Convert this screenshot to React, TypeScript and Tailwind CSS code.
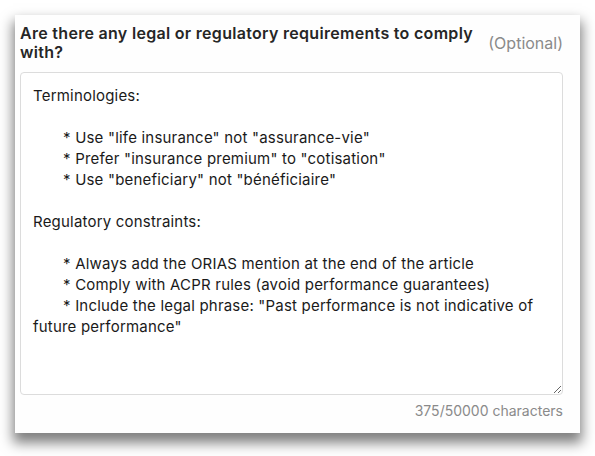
import { useState } from 'react';

const initialText = `Terminologies:

\t* Use "life insurance" not "assurance-vie"
\t* Prefer "insurance premium" to "cotisation"
\t* Use "beneficiary" not "bénéficiaire"

Regulatory constraints:

\t* Always add the ORIAS mention at the end of the article
\t* Comply with ACPR rules (avoid performance guarantees)
\t* Include the legal phrase: "Past performance is not indicative of future performance"
`;

export default function App() {
  const [value, setValue] = useState(initialText);

  return (
    <div className="min-h-screen bg-white p-[15px] font-['Inter',sans-serif]">
      {/* question card */}
      <div className="w-[565px] h-[418px] bg-[#fefefe] pl-[5px] pr-[17px] pt-[9px] shadow-[0_8px_12px_2px_rgba(0,0,0,0.5)]">
        <div className="flex items-center gap-3">
          <h3 className="flex-1 text-[16px] leading-[19px] font-semibold tracking-[0.3px] text-[#262626]">
            Are there any legal or regulatory requirements to comply with?
          </h3>
          <span className="text-[16px] text-[#8a8a8a]">(Optional)</span>
        </div>
        <textarea
          value={value}
          onChange={(e) => setValue(e.target.value)}
          className="mt-[10px] block w-full h-[323px] rounded border border-[#dcdcdc] bg-white p-3 text-[15px] leading-[21px] tracking-[0.2px] text-[#1a1a1a] [tab-size:30px] focus:outline-none"
        />
        <p className="mt-[5px] text-right text-[14px] text-[#8a8a8a]">
          {value.length}/50000 characters
        </p>
      </div>
    </div>
  );
}
